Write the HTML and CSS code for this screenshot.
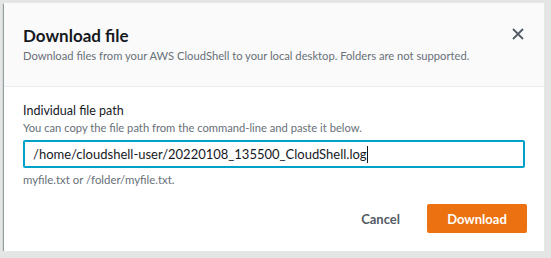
FILE: index.html
```html
<!DOCTYPE html>
<html lang="en">
<head>
    <meta charset="UTF-8">
    <meta name="viewport" content="width=device-width, initial-scale=1.0">
    <link rel="stylesheet" href="styles.css">
    <title>Download file</title>
</head>
<body>
    <div class="modal">
        <div class="modal-header">
            <div class="header-text">
                <h2 class="title">Download file</h2>
                <p class="subtitle">Download files from your AWS CloudShell to your local desktop. Folders are not supported.</p>
            </div>
            <button class="close-btn" aria-label="Close">
                <svg width="12" height="12" viewBox="0 0 12 12">
                    <path d="M1 1 L11 11 M11 1 L1 11" stroke="#545b64" stroke-width="1.8" fill="none"/>
                </svg>
            </button>
        </div>
        <div class="modal-body">
            <label class="field-label" for="path">Individual file path</label>
            <p class="field-desc">You can copy the file path from the command-line and paste it below.</p>
            <div class="input-box">
                <span class="input-text">/home/cloudshell-user/20220108_135500_CloudShell.log</span><span class="caret"></span>
            </div>
            <p class="field-hint">myfile.txt or /folder/myfile.txt.</p>
        </div>
        <div class="modal-footer">
            <button class="btn-link">Cancel</button>
            <button class="btn-primary">Download</button>
        </div>
    </div>
</body>
</html>
```

FILE: styles.css
```css
body {
    margin: 0;
    background-color: #e4e5e5;
    font-family: "Lato", "Open Sans", Arial, sans-serif;
    color: #16191f;
}

.modal {
    margin: 3px 0 0 4px;
    width: 540px;
    height: 248px;
    background-color: #fff;
    box-shadow: -1px 1px 1px rgba(0, 28, 36, 0.35);
    display: flex;
    flex-direction: column;
}

.modal-header {
    background-color: #fafafa;
    border-bottom: 1px solid #eaeded;
    height: 83px;
    padding: 0 20px 0 19px;
    display: flex;
    justify-content: space-between;
}

.title {
    margin: 23px 0 0 0;
    font-size: 17px;
    font-weight: 700;
    line-height: 20px;
}

.subtitle {
    margin: 3px 0 0 0;
    font-size: 11.2px;
    line-height: 14px;
    color: #687078;
}

.close-btn {
    background: none;
    border: none;
    padding: 0;
    margin-top: 25px;
    width: 12px;
    height: 12px;
    cursor: pointer;
}

.modal-body {
    padding: 16px 19px 0 19px;
}

.field-label {
    display: block;
    font-size: 12.5px;
    line-height: 16px;
}

.field-desc {
    margin: 2px 0 0 0;
    font-size: 11.2px;
    line-height: 14px;
    color: #687078;
}

.input-box {
    margin-top: 5px;
    height: 24px;
    border: 2px solid #00a1c9;
    border-radius: 2px;
    padding: 0 8px;
    display: flex;
    align-items: center;
    font-size: 13px;
}

.caret {
    display: inline-block;
    width: 1px;
    height: 17px;
    background-color: #16191f;
}

.field-hint {
    margin: 5px 0 0 0;
    font-size: 11.4px;
    line-height: 14px;
    color: #687078;
}

.modal-footer {
    margin-top: auto;
    padding: 0 17px 18px 20px;
    display: flex;
    justify-content: flex-end;
    align-items: center;
    gap: 27px;
}

.btn-link {
    background: none;
    border: none;
    font-family: inherit;
    font-size: 13px;
    font-weight: 700;
    color: #545b64;
    padding: 0;
    cursor: pointer;
}

.btn-primary {
    background-color: #ec7211;
    border: none;
    border-radius: 2px;
    color: #fff;
    font-family: inherit;
    font-size: 13px;
    font-weight: 700;
    width: 100px;
    height: 29px;
    cursor: pointer;
}
```
